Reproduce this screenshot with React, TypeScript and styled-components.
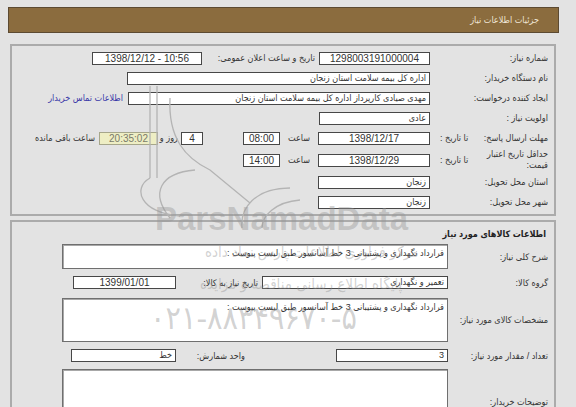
import styled, { createGlobalStyle } from "styled-components";

const GlobalStyle = createGlobalStyle`
  html, body {
    margin: 0;
    padding: 0;
    overflow: hidden;
    background: #e3e3e3;
  }
  body {
    direction: rtl;
    font-family: "Liberation Sans", "DejaVu Sans Condensed", "DejaVu Sans", sans-serif;
    font-size: 9px;
    color: #2a2a2a;
  }
`;

const Page = styled.div`
  position: relative;
  height: 407px;
  padding: 7px 17px 0 8px;
  overflow: hidden;
`;

const Header = styled.div`
  height: 24px;
  background: #8b6c3e;
  border: 1px solid #5c4a32;
  color: #efe6d6;
  display: flex;
  align-items: center;
  padding-right: 19px;
  font-size: 9px;
`;

const Box = styled.div<{ $top: number }>`
  margin: ${({ $top }) => $top}px 3px 0 2px;
  border: 2px solid #ababab;
  padding: 2px 0;
`;

const Row = styled.div<{ $h: number; $mt?: number }>`
  display: flex;
  align-items: center;
  height: ${({ $h }) => $h}px;
  margin-top: ${({ $mt }) => $mt ?? 0}px;
`;

const LabelCell = styled.div<{ $w: number; $pl?: number }>`
  width: ${({ $w }) => $w}px;
  flex: none;
  box-sizing: border-box;
  padding-right: 6px;
  padding-left: ${({ $pl }) => $pl ?? 0}px;
  display: flex;
  align-items: center;
  color: #333;
  white-space: nowrap;
`;

const MainLabel = styled.span`
  flex: 1;
  line-height: 11px;
  white-space: normal;
`;

const SubLabel = styled.span`
  white-space: nowrap;
`;

const InlineLabel = styled.span<{ $w?: number; $pr?: number }>`
  flex: none;
  box-sizing: border-box;
  width: ${({ $w }) => ($w ? `${$w}px` : "auto")};
  padding-right: ${({ $pr }) => $pr ?? 4}px;
  color: #333;
  white-space: nowrap;
`;

const Field = styled.div<{
  $w: number;
  $align?: string;
  $mr?: number;
  $tone?: "yellow";
  $num?: boolean;
}>`
  flex: none;
  box-sizing: border-box;
  width: ${({ $w }) => $w}px;
  height: 13px;
  margin-right: ${({ $mr }) => $mr ?? 0}px;
  border: 1px solid ${({ $tone }) => ($tone ? "#a6a68a" : "#474747")};
  background: ${({ $tone }) => ($tone ? "#eeeec4" : "#fff")};
  color: ${({ $tone }) => ($tone ? "#7a7a6a" : "#333")};
  font-size: ${({ $num }) => ($num ? 10 : 9)}px;
  direction: ${({ $num }) => ($num ? "ltr" : "rtl")};
  line-height: 11px;
  padding: 0 3px;
  text-align: ${({ $align }) => $align ?? "center"};
  white-space: nowrap;
  overflow: hidden;
`;

const Area = styled.div<{ $h: number }>`
  flex: none;
  box-sizing: border-box;
  width: 386px;
  height: ${({ $h }) => $h}px;
  background: #fff;
  border: 1px solid #6f6f6f;
  box-shadow: inset 1px 1px 0 #a8a8a8;
  padding: 2px 3px;
  line-height: 12px;
  color: #333;
  align-self: flex-start;
`;

const Link = styled.span`
  color: #3939a8;
  margin-right: 5px;
  white-space: nowrap;
`;

const Title = styled.div`
  height: 20px;
  display: flex;
  align-items: center;
  padding-right: 8px;
  font-weight: bold;
  color: #222;
`;

const Mark = styled.div<{ $x: number; $y: number; $size: number }>`
  position: absolute;
  left: ${({ $x }) => $x}px;
  top: ${({ $y }) => $y}px;
  font-size: ${({ $size }) => $size}px;
  line-height: 1;
  white-space: nowrap;
  color: rgba(140, 140, 140, 0.4);
  pointer-events: none;
  direction: rtl;
`;

const BoldMark = styled(Mark)`
  font-weight: bold;
  font-family: "Liberation Sans", sans-serif;
  color: rgba(150, 150, 150, 0.42);
  direction: ltr;
`;

const Logo = styled.svg`
  position: absolute;
  left: 140px;
  top: 78px;
  pointer-events: none;
`;

export default function App() {
  return (
    <>
      <GlobalStyle />
      <Page>
        <Header>جزئیات اطلاعات نیاز</Header>

        <Box $top={11}>
          <Row $h={20}>
            <LabelCell $w={124}>شماره نیاز:</LabelCell>
            <Field $w={111} $num>1298003191000004</Field>
            <InlineLabel $w={117}>تاریخ و ساعت اعلان عمومی:</InlineLabel>
            <Field $w={110} $num>1398/12/12 - 10:56</Field>
          </Row>
          <Row $h={20}>
            <LabelCell $w={124}>نام دستگاه خریدار:</LabelCell>
            <Field $w={303} $align="right">اداره کل بیمه سلامت استان زنجان</Field>
          </Row>
          <Row $h={20}>
            <LabelCell $w={124}>ایجاد کننده درخواست:</LabelCell>
            <Field $w={302} $align="right">
              مهدی صیادی کارپرداز اداره کل بیمه سلامت استان زنجان
            </Field>
            <Link>اطلاعات تماس خریدار</Link>
          </Row>
          <Row $h={20}>
            <LabelCell $w={124}>اولویت نیاز :</LabelCell>
            <Field $w={111} $align="right">عادی</Field>
          </Row>
          <Row $h={20}>
            <LabelCell $w={124} $pl={10}>
              <MainLabel>مهلت ارسال پاسخ:</MainLabel>
              <SubLabel>تا تاریخ :</SubLabel>
            </LabelCell>
            <Field $w={112} $num>1398/12/17</Field>
            <InlineLabel $w={38} $pr={8}>ساعت</InlineLabel>
            <Field $w={37} $num>08:00</Field>
            <Field $w={22} $mr={40} $num>4</Field>
            <InlineLabel $w={23} $pr={3}>روز و</InlineLabel>
            <Field $w={59} $tone="yellow" $num>20:35:02</Field>
            <InlineLabel>ساعت باقی مانده</InlineLabel>
          </Row>
          <Row $h={24}>
            <LabelCell $w={124} $pl={10}>
              <MainLabel>حداقل تاریخ اعتبار قیمت:</MainLabel>
              <SubLabel>تا تاریخ :</SubLabel>
            </LabelCell>
            <Field $w={112} $num>1398/12/29</Field>
            <InlineLabel $w={38} $pr={8}>ساعت</InlineLabel>
            <Field $w={37} $num>14:00</Field>
          </Row>
          <Row $h={20}>
            <LabelCell $w={124}>استان محل تحویل:</LabelCell>
            <Field $w={112} $align="right">زنجان</Field>
          </Row>
          <Row $h={20}>
            <LabelCell $w={124}>شهر محل تحویل:</LabelCell>
            <Field $w={112} $align="right">زنجان</Field>
          </Row>
        </Box>

        <Box $top={4}>
          <Title>اطلاعات کالاهای مورد نیاز</Title>
          <Row $h={25}>
            <LabelCell $w={106}>شرح کلی نیاز:</LabelCell>
            <Area $h={25}>قرارداد نگهداری و پشتیبانی 3 خط آسانسور طبق لیست پیوست :</Area>
          </Row>
          <Row $h={13} $mt={7}>
            <LabelCell $w={106}>گروه کالا:</LabelCell>
            <Field $w={186} $align="right">تعمیر و نگهداری</Field>
            <InlineLabel $w={86}>تاریخ نیاز به کالا:</InlineLabel>
            <Field $w={103} $num>1399/01/01</Field>
          </Row>
          <Row $h={44} $mt={9}>
            <LabelCell $w={106}>مشخصات کالای مورد نیاز:</LabelCell>
            <Area $h={44}>قرارداد نگهداری و پشتیبانی 3 خط آسانسور طبق لیست پیوست :</Area>
          </Row>
          <Row $h={13} $mt={7}>
            <LabelCell $w={106}>تعداد / مقدار مورد نیاز:</LabelCell>
            <Field $w={112} $align="right">3</Field>
            <InlineLabel $w={160} $pr={91}>واحد شمارش:</InlineLabel>
            <Field $w={105} $align="right">خط</Field>
          </Row>
          <Row $h={66} $mt={7}>
            <LabelCell $w={106}>توضیحات خریدار:</LabelCell>
            <Area $h={66} />
          </Row>
        </Box>

        <Logo width="180" height="150" viewBox="0 0 180 150" fill="none">
          <g stroke="#b4b4b4" strokeWidth="1.3">
            <path d="M10 8 V 100" />
            <path d="M17 8 V 100" />
            <path d="M30 20 C 28 60, 45 80, 70 92 L 110 125" />
            <path d="M10 100 C -8 110, 0 135, 40 138" />
            <path d="M55 92 C 20 95, 10 115, 30 140" />
            <path d="M150 110 C 115 110, 100 130, 102 150" />
            <path d="M160 122 C 135 124, 122 138, 122 150" />
          </g>
        </Logo>

        <BoldMark $x={155} $y={202} $size={33}>ParsNamadData</BoldMark>
        <Mark $x={205} $y={244} $size={15}>مرکز فراوری اطلاعات پارس نماد داده</Mark>
        <Mark $x={200} $y={276} $size={15}>پایگاه اطلاع رسانی مناقصه و مزایده</Mark>
        <Mark $x={150} $y={302} $size={32}>۰۲۱-۸۸۳۴۹۶۷۰-۵</Mark>
      </Page>
    </>
  );
}
